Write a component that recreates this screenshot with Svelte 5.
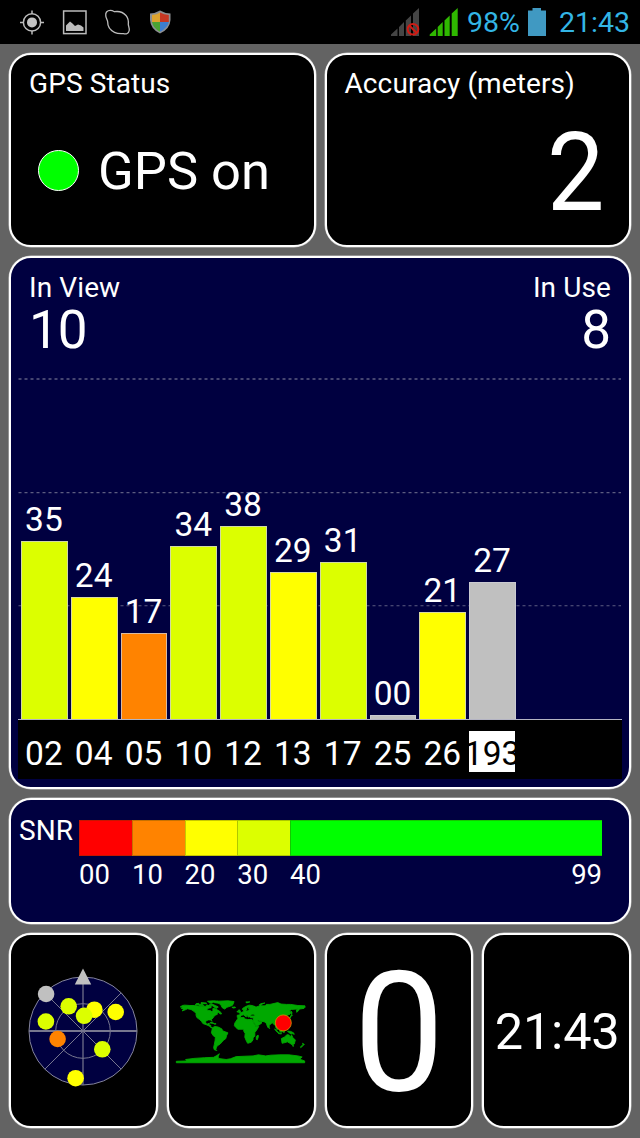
<script>
  const UNIT = 5.08;
  const satellites = [
    { id: '02', snr: '35', color: '#dcff00' },
    { id: '04', snr: '24', color: '#ffff00' },
    { id: '05', snr: '17', color: '#ff8300' },
    { id: '10', snr: '34', color: '#dcff00' },
    { id: '12', snr: '38', color: '#dcff00' },
    { id: '13', snr: '29', color: '#ffff00' },
    { id: '17', snr: '31', color: '#dcff00' },
    { id: '25', snr: '00', color: '#c0c0c0' },
    { id: '26', snr: '21', color: '#ffff00' },
    { id: '193', snr: '27', color: '#c0c0c0', inverted: true }
  ];
  const barHeight = (snr) => Math.max(4.4, Number(snr) * UNIT);

  const legend = [
    { from: '00', color: '#ff0000', width: 53 },
    { from: '10', color: '#ff8300', width: 52.6 },
    { from: '20', color: '#ffff00', width: 52.7 },
    { from: '30', color: '#dcff00', width: 52.8 },
    { from: '40', to: '99', color: '#00ff00', width: 312 }
  ];

  const sky = [
    [37, 35, '#c0c0c0'],
    [59.6, 47.3, '#dcff00'],
    [85.3, 50.7, '#ffff00'],
    [106.6, 53, '#ffff00'],
    [75, 56.8, '#dcff00'],
    [36.8, 62.5, '#dcff00'],
    [48.5, 80, '#ff8300'],
    [93.2, 90.3, '#dcff00'],
    [66.5, 119.2, '#ffff00']
  ];

  const land = [
    // North and Central America
    '-168,66 -162,70 -156,71 -141,70 -128,70 -115,68 -105,68 -95,68 -94,72 -86,68 -82,68 -82,64 -88,63 -94,60 -92,57 -82,55 -79,51 -77,56 -77,62 -70,61 -65,58 -60,55 -56,52 -66,50 -64,46 -70,43 -74,40 -76,36 -81,31 -80,26 -83,30 -90,30 -97,27 -97,22 -94,18 -91,19 -87,21 -88,16 -83,15 -83,10 -78,8 -82,8 -87,13 -94,16 -105,20 -109,26 -114,31 -117,33 -122,37 -124,43 -124,48 -130,54 -138,59 -148,61 -154,58 -163,55 -158,59 -165,62 -161,65',
    '-85,73 -80,74 -70,70 -62,66 -66,62 -73,65 -78,69 -89,70',
    '-118,73 -105,73 -103,69 -115,69',
    '-124,75 -116,76 -118,72 -126,72',
    '-92,82 -75,83 -62,82 -75,79 -82,76 -88,78',
    '-110,78 -95,77 -95,75 -110,75',
    '-59,51 -53,49 -54,46 -59,48',
    // Greenland
    '-73,78 -60,82 -35,83 -18,81 -20,75 -23,70 -38,65 -44,60 -51,64 -54,70 -60,76',
    // Caribbean
    '-85,22 -78,23 -74,20 -78,20', '-73,20 -68,19 -73,18',
    // South America
    '-78,8 -72,12 -62,10 -52,5 -50,0 -43,-3 -35,-6 -39,-14 -41,-22 -48,-27 -54,-34 -58,-38 -65,-42 -67,-47 -69,-52 -66,-55 -73,-53 -75,-47 -73,-38 -71,-28 -70,-18 -76,-14 -81,-6 -80,0',
    // Europe and Asia
    '-9,43 -1,44 -2,48 4,51 9,54 8,57 11,58 12,55 20,55 24,59 29,60 22,61 25,65 21,65 17,61 18,59 13,55 10,59 5,59 6,62 14,67 24,71 32,70 41,67 33,66 44,66 54,69 68,69 72,73 82,73 104,78 113,74 128,73 140,73 160,70 180,69 180,65 177,62 164,60 162,56 157,51 156,58 164,62 155,60 142,59 135,54 141,52 138,46 131,43 127,39 129,35 126,35 124,40 118,39 122,37 119,34 122,30 118,24 110,21 106,19 109,12 105,9 100,13 103,2 98,9 98,16 94,16 91,22 86,20 80,15 80,10 77,8 73,17 72,21 66,25 57,26 50,30 48,30 52,25 56,25 60,22 52,16 44,13 39,21 35,28 36,36 28,36 26,40 29,41 41,41 37,46 31,46 28,42 23,37 19,42 13,46 18,40 16,38 9,44 3,43 -2,37 -9,37',
    '-5,50 1,51 0,54 -3,58 -6,57 -4,54', '-10,52 -6,52 -6,55 -9,54', '-24,65 -15,66 -14,64 -20,63',
    '52,71 57,70 60,74 68,77 56,75', '142,54 144,49 142,46', '130,31 132,34 139,35 141,41 145,43 142,45 139,38 131,34', '15,80 26,80 17,77',
    // Africa
    '-6,36 10,37 11,33 20,31 32,31 37,21 43,12 51,12 46,3 40,-5 40,-15 35,-20 35,-25 30,-32 20,-35 17,-30 12,-18 13,-8 9,-1 9,4 -7,4 -13,9 -17,14 -16,21 -10,30',
    '49,-12 50,-16 47,-25 44,-24 44,-16', '80,9 82,7 80,6',
    // South-East Asia and Oceania
    '95,5 103,-1 106,-6 101,-3', '105,-6 114,-7 114,-9 106,-8', '109,2 117,7 118,1 116,-4 110,-3', '119,1 124,1 122,-5 120,-5', '120,18 122,18 123,12 126,7 122,8 120,14', '131,-1 140,-2 148,-6 150,-10 144,-8 138,-8 134,-4',
    '114,-22 122,-18 130,-11 136,-12 136,-15 140,-17 142,-11 146,-19 153,-26 150,-37 144,-39 138,-35 131,-31 124,-33 116,-35',
    '145,-41 148,-41 147,-44', '173,-35 178,-38 175,-41', '172,-41 174,-42 168,-47 167,-45',
    // Antarctica
    '-179,-85 -150,-84 -153,-80 -130,-77 -100,-75 -75,-74 -66,-69 -59,-64 -62,-71 -62,-77 -40,-80 -28,-78 -12,-72 10,-71 35,-70 50,-67 70,-70 85,-68 110,-67 135,-67 160,-70 172,-73 165,-79 179,-84 179,-89 -179,-89'
  ].map((p) => 'M' + p.split(' ').map((c) => c.split(',').map((n, i) => (i ? -n : n)).join(' ')).join('L') + 'Z').join('');
</script>

{#snippet signal(color)}
  <path fill={color} d="M0 28V26.5L6.5 20.5V28ZM8 28V19L13 14V28ZM14.8 28V12.5L20 7.500V28ZM22 28V5.500L28 0V28Z" />
{/snippet}

<div class="screen">
  <header class="status">
    <svg class="notes" width="180" height="44" viewBox="0 0 180 44">
      <g fill="none" stroke="#bcbcbc" stroke-width="1.5">
        <circle cx="32" cy="22.400" r="8.600" />
        <path d="M32 10.500V14M32 31V34.500M20 22.400H23.500M40.500 22.400H44" />
        <rect x="63.600" y="11" width="22.400" height="22.600" />
        <path stroke-width="1.300" d="M106.500 12C108.500 10 112 10.300 114.500 11.700C119 11 123 12 126 15.500C128.500 18.500 128.700 21 128.300 24.500C128.500 26.500 129.600 28 129.200 30.500C128.700 33.500 126.300 34.400 123.500 33.700C120 33.500 118 34 114.500 32.300C110 30 107.500 27 107.700 22C107.700 20 106 18.500 105.800 16C105.500 14 105.700 13 106.500 12Z" />
      </g>
      <circle cx="32" cy="22.400" r="5" fill="#c4c4c4" />
      <path d="M66 31V25.500L68 23.500L70 21.500L72.500 23.500L75 26L78 24.500L81 25.500L83.500 27.500V31Z" fill="#bcbcbc" />
      <path d="M150 13.500Q156 13 160 10.500Q164 13 170.500 13.500V20Q170 29 160 33.500Q150.500 29 150 20Z" fill="#8d8f92" />
      <path d="M152 15Q157 14.500 160 12.500V22H152Z" fill="#dea32e" />
      <path d="M160 12.500Q164 14.500 168.800 15V22H160Z" fill="#c63723" />
      <path d="M152 22H160V31.800Q153 28 152 22Z" fill="#4ba334" />
      <path d="M160 22H168.800Q167.500 28 160 31.800Z" fill="#3c7ed0" />
    </svg>
    <div class="system">
      <svg width="67" height="30" viewBox="0 0 67 30">
        {@render signal('#454545')}
        <g fill="none" stroke="#d01b14" stroke-width="2"><circle cx="22" cy="21.300" r="5.300" /><path d="M18.300 17.500L25.700 25" /></g>
        <g transform="translate(38.700 0)">{@render signal('#2fb800')}</g>
      </svg>
      <span class="percent">98%</span>
      <svg class="battery" width="18" height="28" viewBox="0 0 18 28"><path fill="#4099c2" d="M0 2.500H4.500V0H13V2.500H18V28H0Z" /></svg>
      <span class="clock">21:43</span>
    </div>
  </header>

  <main>
    <div class="row top">
      <section class="card gps">
        <h2>GPS Status</h2>
        <div class="fix"><i class="lamp"></i><span>GPS on</span></div>
      </section>
      <section class="card accuracy">
        <h2>Accuracy (meters)</h2>
        <div class="meters">2</div>
      </section>
    </div>

    <section class="card blue view">
      <div class="counts">
        <div><h2>In View</h2><b class="seen">10</b></div>
        <div class="use"><h2>In Use</h2><b>8</b></div>
      </div>
      <div class="plot">
        <svg class="grid" width="604" height="366" viewBox="0 0 604 366">
          <g stroke="#5c5c80" stroke-dasharray="3 3">
            <path d="M0.500 25H603" stroke-width="1.500" />
            <path d="M0.500 138.600H603" stroke-width="1.100" />
            <path d="M0.500 251.700H603" stroke-width="1.100" />
          </g>
        </svg>
        <div class="bars">
          {#each satellites as s}
            <div class="col">
              <span>{s.snr}</span>
              <div class="bar" style="height:{barHeight(s.snr)}px;background:{s.color}"></div>
            </div>
          {/each}
        </div>
      </div>
      <div class="ids">
        {#each satellites as s}
          <div class="id" class:inverted={s.inverted}><span>{s.id}</span></div>
        {/each}
      </div>
    </section>

    <section class="card blue snr">
      <h2>SNR</h2>
      <div class="legend">
        {#each legend as l}
          <div class="step" style="width:{l.width}px">
            <div class="swatch" style="background:{l.color}"></div>
            <div class="ticks"><span>{l.from}</span>{#if l.to}<span>{l.to}</span>{/if}</div>
          </div>
        {/each}
      </div>
    </section>

    <div class="row bottom">
      <section class="card">
        <svg width="145" height="191" viewBox="0 -24 145 191">
          <circle cx="72" cy="72" r="54" fill="#000040" stroke="#85859b" />
          <g fill="none" stroke="#77778f">
            <circle cx="72" cy="72" r="27.300" />
            <path d="M72 18V126" stroke-width="1.200" />
            <path d="M18 72H126" stroke-width="1.800" />
            <path d="M33.800 33.800L110.200 110.200M110.200 33.800L33.800 110.200" />
          </g>
          <path d="M72 9.500L80.200 25.500H63.800Z" fill="#c0c0c0" />
          {#each sky as [x, y, c]}<circle cx={x - 1.900} cy={y} r="8.300" fill={c} />{/each}
        </svg>
      </section>
      <section class="card">
        <svg width="145" height="191" viewBox="169 935.300 145 191">
          <path d={land} fill="#00a800" stroke="#00a800" stroke-width="2.500" transform="translate(240.500 1031) scale(.3585 .36)" />
          <circle cx="283.300" cy="1023.200" r="8" fill="#f00" stroke="#c98a00" stroke-width=".9" />
        </svg>
      </section>
      <section class="card speed"><span>0</span></section>
      <section class="card time"><span>21:43</span></section>
    </div>
  </main>
</div>

<style>
  :global(body) { margin: 0; background: #636363; }
  .screen { width: 640px; height: 1138px; overflow: hidden; background: #636363; color: #fff; font-family: Roboto, sans-serif; }
  .screen * { box-sizing: border-box; }
  svg { display: block; }
  .status { height: 44px; background: #000; display: flex; justify-content: space-between; color: #33b5e5; font-size: 28.5px; line-height: 44px; }
  .system { display: flex; align-items: flex-start; width: 249px; }
  .system > svg { margin-top: 8px; flex: none; }
  .percent { margin-left: 9px; width: 61px; white-space: nowrap; line-height: 46px; }
  .clock { margin-left: 13px; line-height: 46px; }
  main { padding: 9px 9px 0; display: flex; flex-direction: column; gap: 9px; }
  .row { display: grid; gap: 9px; }
  .top { grid-template-columns: repeat(2, minmax(0, 1fr)); }
  .bottom { grid-template-columns: repeat(4, minmax(0, 1fr)); }
  .card { border: 2px solid #fff; border-radius: 22px; background: #000; box-shadow: 0 0 0 .5px rgba(255,255,255,.6); min-width: 0; }
  .blue { background: #000040; flex: none; }
  h2 { margin: 0; font-size: 28px; line-height: 32px; font-weight: 400; white-space: nowrap; letter-spacing: .1px; }
  .top .card { height: 194px; padding: 13px 17px 0 18px; }
  .fix { display: flex; align-items: center; margin: 41px 0 0 9px; gap: 19px; font-size: 52.5px; line-height: 60px; white-space: nowrap; }
  .lamp { width: 41px; height: 41px; border-radius: 50%; background: #0f0; border: 1px solid #fff; margin-bottom: 2px; }
  .top .accuracy { padding-right: 25px; }
  .meters { margin-top: 18px; font-size: 110px; line-height: 110px; text-align: right; transform: scaleX(.93); transform-origin: right; }
  .view { height: 533px; padding: 14px 7px 0; }
  .counts { display: flex; justify-content: space-between; padding: 0 11px; height: 82px; }
  .counts b { display: block; font-weight: 400; font-size: 53px; line-height: 52px; }
  .counts .seen { letter-spacing: -1px; }
  .use { text-align: right; }
  .plot { position: relative; height: 366px; border-bottom: 1px solid #b4b4c4; }
  .grid { position: absolute; left: 0; top: 0; }
  .bars { position: relative; display: flex; align-items: flex-end; gap: 3px; height: 100%; padding-left: 3px; }
  .col { width: 46.8px; font-size: 33.5px; line-height: 40px; text-align: center; flex: none; }
  .col span { display: block; margin: 0 1px 1px 0; }
  .bar { border: 1px solid rgba(205,205,215,.75); border-bottom: 0; }
  .ids { display: flex; gap: 3px; height: 59px; padding: 11px 0 0 3px; background: #000; font-size: 33.5px; line-height: 45px; }
  .id { width: 46.8px; height: 41px; flex: none; display: flex; justify-content: center; overflow: hidden; }
  .id span { margin-right: 1px; }
  .inverted { background: #fff; color: #000; width: 46px; }
  .inverted span { margin-right: 0; }
  .snr { height: 126px; display: flex; padding: 20px 0 0 8px; }
  .snr h2 { width: 60px; margin-top: -5px; }
  .legend { display: flex; }
  .swatch { height: 36px; border: 1px solid rgba(70,70,0,.3); border-right: 0; }
  .ticks { display: flex; justify-content: space-between; font-size: 27.5px; line-height: 32px; margin-top: 3px; }
  .bottom .card { height: 195px; }
  .speed, .time { display: flex; align-items: center; justify-content: center; }
  .speed { font-size: 167px; line-height: 190px; padding-top: 5px; }
  .speed span { transform: scaleX(.97); }
  .time { font-size: 50.5px; padding: 2px 0 0 1px; letter-spacing: -.2px; }
</style>
